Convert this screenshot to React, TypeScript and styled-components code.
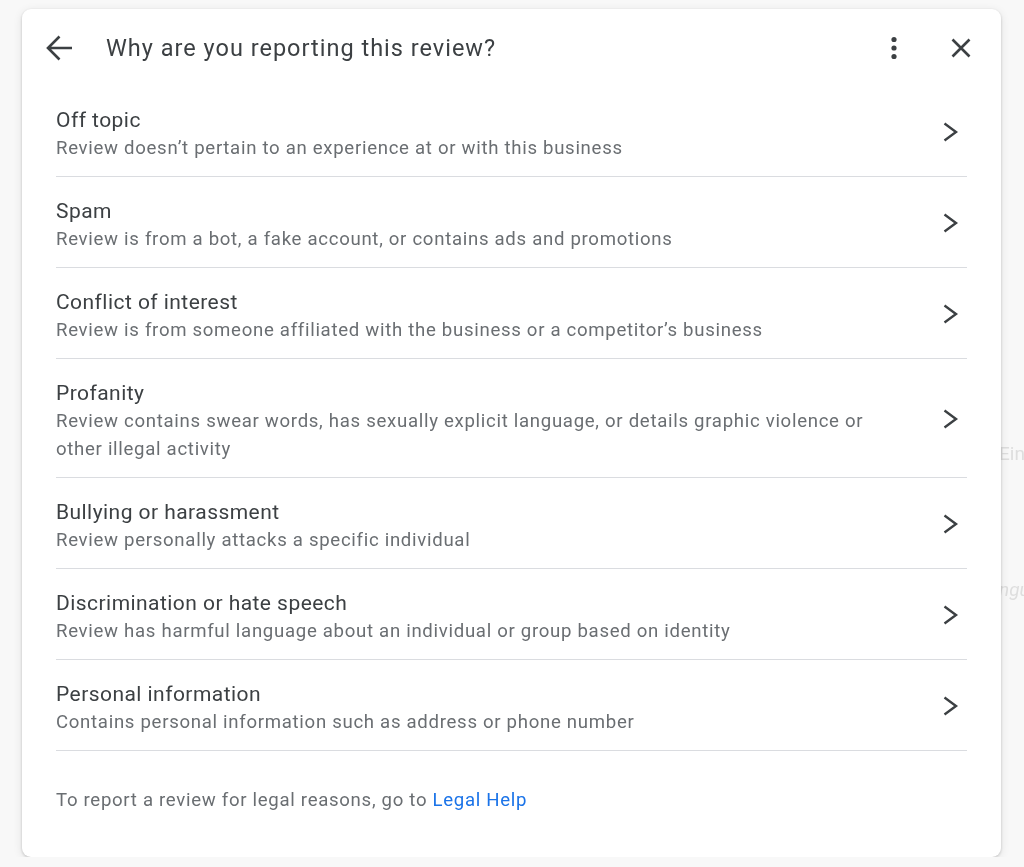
import { FC } from "react";
import styled, { createGlobalStyle } from "styled-components";

const GlobalStyle = createGlobalStyle`
  html, body {
    margin: 0;
    padding: 0;
    background: #f8f8f8;
    font-family: Roboto, "Noto Sans", Arial, sans-serif;
  }
`;

interface IReason {
  title: string;
  text: string;
}

const reasons: IReason[] = [
  {
    title: "Off topic",
    text: "Review doesn’t pertain to an experience at or with this business",
  },
  {
    title: "Spam",
    text: "Review is from a bot, a fake account, or contains ads and promotions",
  },
  {
    title: "Conflict of interest",
    text: "Review is from someone affiliated with the business or a competitor’s business",
  },
  {
    title: "Profanity",
    text: "Review contains swear words, has sexually explicit language, or details graphic violence or other illegal activity",
  },
  {
    title: "Bullying or harassment",
    text: "Review personally attacks a specific individual",
  },
  {
    title: "Discrimination or hate speech",
    text: "Review has harmful language about an individual or group based on identity",
  },
  {
    title: "Personal information",
    text: "Contains personal information such as address or phone number",
  },
];

const BackIcon = () => (
  <svg width="36" height="36" viewBox="0 0 36 36" fill="none">
    <path
      d="M30 18H7.5M17.5 6.5L6 18l11.5 11.5"
      stroke="#3c4043"
      strokeWidth="2.6"
    />
  </svg>
);

const MoreIcon = () => (
  <svg width="30" height="30" viewBox="0 0 30 30" fill="#3c4043">
    <circle cx="15" cy="6.5" r="2.6" />
    <circle cx="15" cy="15" r="2.6" />
    <circle cx="15" cy="23.5" r="2.6" />
  </svg>
);

const CloseIcon = () => (
  <svg width="30" height="30" viewBox="0 0 30 30" fill="none">
    <path d="M6.5 6.5l17 17M23.5 6.5l-17 17" stroke="#3c4043" strokeWidth="2.6" />
  </svg>
);

const ChevronIcon = () => (
  <svg width="24" height="24" viewBox="0 0 24 24" fill="none">
    <path d="M6.5 3.5L18 12 6.5 20.5" stroke="#3c4043" strokeWidth="2.4" />
  </svg>
);

const App: FC = () => {
  return (
    <>
      <GlobalStyle />
      <Backdrop>
        <Ghost top={442}>Ein</Ghost>
        <Ghost top={578} italic>
          ngu
        </Ghost>
      </Backdrop>
      <Page>
        <Card>
          <Header>
            <IconButton>
              <BackIcon />
            </IconButton>
            <Heading>Why are you reporting this review?</Heading>
            <HeaderActions>
              <IconButton>
                <MoreIcon />
              </IconButton>
              <IconButton>
                <CloseIcon />
              </IconButton>
            </HeaderActions>
          </Header>
          <List>
            {reasons.map((r) => (
              <Row key={r.title}>
                <RowText>
                  <RowTitle>{r.title}</RowTitle>
                  <RowDesc>{r.text}</RowDesc>
                </RowText>
                <Chevron>
                  <ChevronIcon />
                </Chevron>
              </Row>
            ))}
          </List>
          <Footer>
            To report a review for legal reasons, go to{" "}
            <Link href="#">Legal Help</Link>
          </Footer>
        </Card>
      </Page>
    </>
  );
};

export default App;

const Backdrop = styled.div`
  position: fixed;
  inset: 0;
  overflow: hidden;
  z-index: 0;
`;

const Ghost = styled.span<{ top: number; italic?: boolean }>`
  position: absolute;
  left: 999px;
  top: ${(p) => p.top}px;
  font-size: 19px;
  color: #dedede;
  font-style: ${(p) => (p.italic ? "italic" : "normal")};
`;

const Page = styled.div`
  position: relative;
  z-index: 1;
  padding: 9px 0 0 22px;
`;

const Card = styled.div`
  width: 979px;
  height: 848px;
  box-sizing: border-box;
  background: #fff;
  border-radius: 9px;
  box-shadow: 0 1px 3px rgba(0, 0, 0, 0.18), 0 2px 10px rgba(0, 0, 0, 0.1);
  display: flex;
  flex-direction: column;
  overflow: hidden;
`;

const Header = styled.div`
  height: 77px;
  display: flex;
  align-items: center;
  padding: 0 22px 0 20px;
  flex-shrink: 0;
`;

const IconButton = styled.div`
  width: 36px;
  height: 36px;
  display: flex;
  align-items: center;
  justify-content: center;
`;

const Heading = styled.h1`
  margin: 0 0 0 28px;
  flex: 1;
  font-size: 23.5px;
  font-weight: 400;
  color: #3c4043;
  letter-spacing: 1px;
`;

const HeaderActions = styled.div`
  display: flex;
  align-items: center;
  gap: 31px;
`;

const List = styled.div`
  display: flex;
  flex-direction: column;
  margin: 0 34px;
`;

const Row = styled.div`
  display: flex;
  align-items: center;
  padding: 20px 0 14px;
  border-bottom: 1px solid #dadce0;
`;

const RowText = styled.div`
  width: 840px;
  display: flex;
  flex-direction: column;
`;

const RowTitle = styled.div`
  font-size: 21px;
  line-height: 28px;
  letter-spacing: 0.45px;
  color: #3c4043;
`;

const RowDesc = styled.div`
  font-size: 18.6px;
  line-height: 28px;
  letter-spacing: 0.7px;
  color: #6a6e72;
`;

const Chevron = styled.div`
  margin-left: auto;
  margin-right: 5px;
  margin-bottom: 4px;
  display: flex;
  align-items: center;
`;

const Footer = styled.div`
  margin: 35px 34px 0;
  font-size: 18.6px;
  line-height: 28px;
  letter-spacing: 0.7px;
  color: #6a6e72;
`;

const Link = styled.a`
  color: #1a73e8;
  text-decoration: none;
`;
